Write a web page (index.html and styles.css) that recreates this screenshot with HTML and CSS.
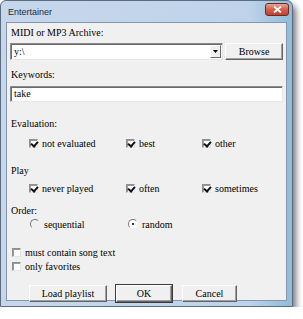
FILE: index.html
```html
<!doctype html>
<html>
<head>
<meta charset="utf-8">
<title>Entertainer</title>
<link rel="stylesheet" href="styles.css">
</head>
<body>
<div class="window">
	<div class="titlebar">
		<span class="title">Entertainer</span>
		<span class="close"><svg width="9" height="7" viewBox="0 0 9 7"><path d="M1 0.5 L8 6.5 M8 0.5 L1 6.5" stroke="#fff" stroke-width="1.8"/></svg></span>
	</div>
	<div class="client">
		<div class="label l-archive">MIDI or MP3 Archive:</div>
		<div class="archive-row">
			<div class="combo">
				<span class="combo-text">y:\</span>
				<span class="combo-btn"><svg width="5" height="3" viewBox="0 0 5 3"><path d="M0 0 H5 L2.5 3 Z" fill="#000"/></svg></span>
			</div>
			<button class="btn btn-browse">Browse</button>
		</div>
		<div class="label l-keywords">Keywords:</div>
		<div class="textbox">take</div>

		<div class="label l-eval">Evaluation:</div>
		<div class="opts opts-eval">
			<div class="opt col1"><span class="chk on"></span>not evaluated</div>
			<div class="opt col2"><span class="chk on"></span>best</div>
			<div class="opt"><span class="chk on"></span>other</div>
		</div>

		<div class="label l-play">Play</div>
		<div class="opts opts-play">
			<div class="opt col1"><span class="chk on"></span>never played</div>
			<div class="opt col2"><span class="chk on"></span>often</div>
			<div class="opt"><span class="chk on"></span>sometimes</div>
		</div>

		<div class="label l-order">Order:</div>
		<div class="opts opts-order">
			<div class="opt col1r"><span class="radio"></span>sequential</div>
			<div class="opt"><span class="radio sel"></span>random</div>
		</div>

		<div class="opt single s-first"><span class="chk"></span>must contain song text</div>
		<div class="opt single"><span class="chk"></span>only favorites</div>

		<div class="buttons">
			<button class="btn btn-load">Load playlist</button>
			<button class="btn btn-ok">OK</button>
			<button class="btn btn-cancel">Cancel</button>
		</div>
	</div>
</div>
</body>
</html>
```

FILE: styles.css
```css
*{margin:0;padding:0;box-sizing:border-box;}
body{background:#fff;font-family:"Liberation Serif","Times New Roman",serif;font-size:10px;color:#000;}

.window{width:293px;height:307px;border:1px solid #5b6b80;border-radius:6px 6px 0 0;
 background:linear-gradient(90deg,#c6d7ec,#bed3ea 85%,#8fbcd9);padding:0 5px 5px;
 box-shadow:3px 5px 6px rgba(0,0,0,.55);}
.titlebar{height:21px;display:flex;align-items:center;justify-content:space-between;padding:0 0 0 2px;}
.title{font-family:"Liberation Sans",Arial,sans-serif;font-size:9px;color:#1e2a3a;}
.close{width:24px;height:13px;margin-top:-4px;margin-right:-2px;border:1px solid #6a2a22;border-radius:3px;
 background:linear-gradient(#e8a296,#d25f4c 50%,#c2412c);display:flex;align-items:center;justify-content:center;}

.client{height:279px;background:#f0f0f0;border:1px solid #8396ae;padding:0 3px;}
.label{line-height:12px;height:12px;padding-left:1px;}
.l-archive{margin-top:4px;}
.l-keywords{margin-top:9px;}
.l-eval{margin-top:16px;}
.l-play{margin-top:15px;}
.l-order{margin-top:10px;}

.archive-row{display:flex;gap:2px;margin-top:4px;height:17px;}
.combo{width:214px;height:17px;background:#fff;border:1px solid;border-color:#8a8a8a #e6e6e6 #e6e6e6 #8a8a8a;
 box-shadow:inset 1px 1px #6a6a6a;display:flex;align-items:center;padding:0 1px 0 3px;}
.combo-text{flex:1;}
.combo-btn{width:11px;height:13px;background:#f0f0f0;border:1px solid;border-color:#fff #6a6a6a #6a6a6a #fff;
 display:flex;align-items:center;justify-content:center;}

.btn{font-family:inherit;font-size:10px;color:#000;background:#f0f0f0;
 border:1px solid;border-color:#fff #646464 #646464 #fff;box-shadow:inset -1px -1px #a0a0a0;height:17px;}
.btn-browse{width:58px;}

.textbox{margin-top:5px;height:16px;background:#fff;border:1px solid;border-color:#8a8a8a #e6e6e6 #e6e6e6 #8a8a8a;
 box-shadow:inset 1px 1px #6a6a6a;padding:0 3px;line-height:14px;}

.opts{display:flex;padding-left:19px;height:14px;}
.opts-eval{margin-top:6px;}
.opts-play{margin-top:4px;}
.opt{display:flex;align-items:center;gap:4px;height:14px;}
.col1{width:97px;}
.col2{width:76px;}
.col1r{width:98px;}

.chk{width:9px;height:9px;background:#fff;border:1px solid;border-color:#8e8e8e #e4e4e4 #e4e4e4 #8e8e8e;
 box-shadow:inset 1px 1px #9a9a9a;position:relative;}
.chk.on::after{content:"";position:absolute;left:2px;top:0;width:3px;height:5px;border:solid #111;
 border-width:0 2px 2px 0;transform:rotate(40deg);}

.radio{width:10px;height:10px;border-radius:50%;border:1px solid;border-color:#7a7a7a #f0f0f0 #f0f0f0 #7a7a7a;position:relative;}
.radio.sel{background:#fff;}
.radio.sel::after{content:"";position:absolute;left:3px;top:3px;width:2px;height:2px;background:#000;border-radius:50%;}
.opts-order{padding-left:20px;}

.single{padding-left:2px;}
.s-first{margin-top:14px;}

.buttons{display:flex;padding-left:19px;margin-top:12px;}
.btn-load{width:78px;}
.btn-ok{width:56px;margin-left:9px;box-shadow:inset -1px -1px #a0a0a0,0 0 0 1px #3c3c3c;}
.btn-cancel{width:55px;margin-left:10px;}
```
